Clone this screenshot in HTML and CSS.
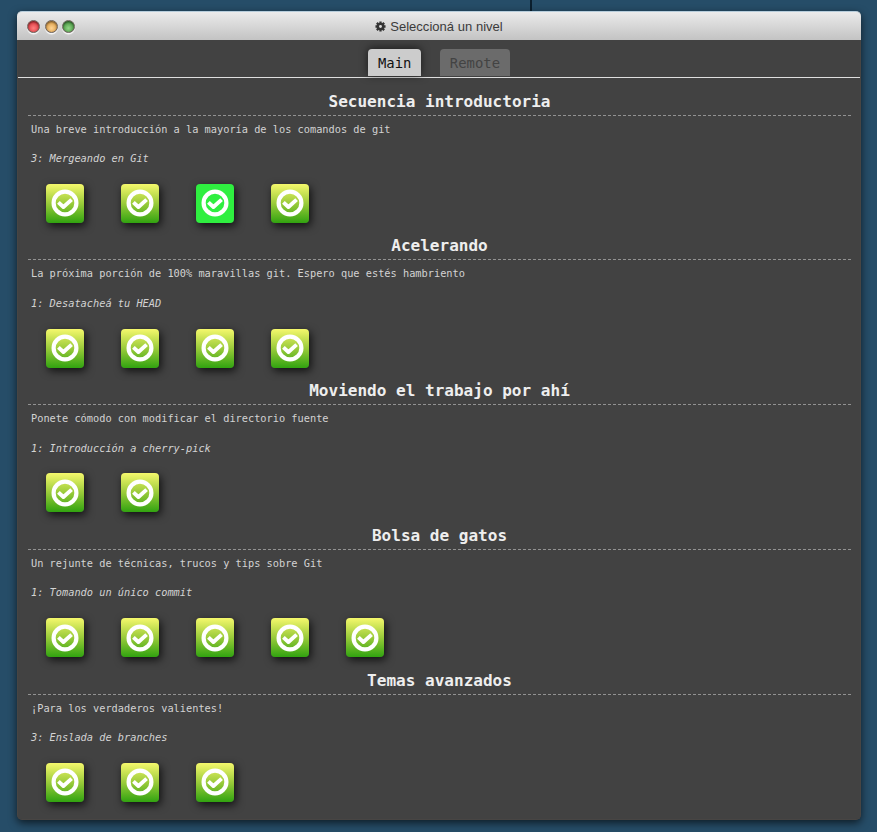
FILE: index.html
```html
<!DOCTYPE html>
<html lang="es">
<head>
<meta charset="utf-8">
<title>Seleccioná un nivel</title>
<link rel="stylesheet" href="styles.css">
</head>
<body>
<svg class="defs" width="0" height="0" aria-hidden="true">
  <symbol id="ok" viewBox="0 0 28 28">
    <circle cx="14" cy="14" r="11.4" fill="none" stroke="#fff" stroke-width="4.2"/>
    <path d="M7.4 13.3l5 4.7 8.2-7.4" fill="none" stroke="#fff" stroke-width="3.9" stroke-linejoin="round"/>
  </symbol>
</svg>
<div class="branch-line"></div>
<main class="window">
  <header class="titlebar">
    <div class="buttons"><i class="red"></i><i class="yellow"></i><i class="green"></i></div>
    <svg class="gear" viewBox="0 0 12 12"><g stroke="#333" stroke-width="2.5"><path d="M6 .5v11M.5 6h11M2 2l8 8M10 2L2 10"/></g><circle cx="6" cy="6" r="2.9" fill="#dcdcdc" stroke="#333" stroke-width="2.6"/></svg>
    <span class="caption">Seleccioná un nivel</span>
  </header>
  <nav class="tabs"><div class="tab active">Main</div><div class="tab">Remote</div></nav>
  <div class="levels" id="levels"></div>
</main>
<script src="levels.js"></script>
</body>
</html>
```

FILE: styles.css
```css
* { box-sizing: border-box; }
body {
  margin: 0;
  height: 832px;
  padding: 11px 16px 0 17px;
  overflow: hidden;
  background: #264d68;
  font-family: "DejaVu Sans Mono", monospace;
}
.defs { position: absolute; }
.branch-line {
  position: absolute;
  left: 530px;
  top: 0;
  width: 2px;
  height: 11px;
  background: #0b1f2e;
}
.window {
  position: relative;
  height: 809px;
  border: 1px solid #484543;
  border-top: 0;
  border-radius: 5px;
  background: #424242;
  box-shadow: 0 3px 9px rgba(0, 0, 0, .65);
}
.titlebar {
  display: flex;
  align-items: center;
  justify-content: center;
  position: relative;
  height: 29px;
  margin: 0 -1px;
  padding-top: 2px;
  border-top: 1px solid #b7cddb;
  border-radius: 5px 5px 0 0;
  background: linear-gradient(#ebebeb, #c3c3c3);
}
.buttons {
  position: absolute;
  left: 10px;
  top: 8px;
  display: flex;
  gap: 4.5px;
}
.buttons i {
  width: 13px;
  height: 13px;
  border-radius: 50%;
  border: 1px solid #70645d;
  box-shadow: 0 1.5px 1px rgba(255, 255, 255, .85), inset 0 1px 2px rgba(0, 0, 0, .55);
}
.red { background: radial-gradient(circle at 50% 65%, #ff7d7d, #dd4148 65%); }
.yellow { background: radial-gradient(circle at 50% 65%, #ffd391, #dfa450 65%); }
.green { background: radial-gradient(circle at 50% 65%, #91d584, #4f9c48 65%); }
.gear { width: 11px; height: 11px; margin: -2px 4px 0 0; }
.caption {
  font: 13px/20px "Liberation Sans", sans-serif;
  letter-spacing: .03px;
  color: #3b3b3b;
}
.tabs {
  display: flex;
  justify-content: center;
  align-items: flex-end;
  gap: 19px;
  height: 38px;
  padding-bottom: 1px;
  border-bottom: 1px solid #dedede;
}
.tab {
  height: 27px;
  padding: 0 9.7px;
  border-radius: 4px 4px 0 0;
  background: #6b6b6b;
  color: #434343;
  font-size: 13.9px;
  line-height: 28px;
}
.tab.active {
  background: #ccc;
  color: #111;
  box-shadow: 0 -1px 9px rgba(0, 0, 0, .6);
}
.levels { padding: 10.5px 9px 0 10px; }
.sequence { height: 144.75px; }
.sequence h2 {
  margin: 0;
  height: 27px;
  border-bottom: 1px dashed #929292;
  color: #eee;
  font-size: 16.05px;
  line-height: 25px;
  text-align: center;
}
.sequence p {
  margin: 0 0 0 3px;
  height: 29.5px;
  color: #d3d3d3;
  font-size: 10.3px;
  line-height: 27.8px;
}
.sequence .name { font-style: italic; }
.icons {
  display: flex;
  gap: 37px;
  padding: 9.4px 0 0 18px;
}
.icon {
  display: grid;
  place-items: center;
  width: 38px;
  height: 39px;
  border-radius: 4px;
  background: linear-gradient(#f5f86c, #9acb3a 50%, #31a310);
  box-shadow: 2px 3px 9px rgba(0, 0, 0, .75);
}
.icon.current { background: #2fef40; }
.icon svg { width: 28px; height: 28px; }
```

FILE: levels.js
```js
const sequences = [
  ['Secuencia introductoria', 'Una breve introducción a la mayoría de los comandos de git', '3: Mergeando en Git', 4, 2],
  ['Acelerando', 'La próxima porción de 100% maravillas git. Espero que estés hambriento', '1: Desatacheá tu HEAD', 4],
  ['Moviendo el trabajo por ahí', 'Ponete cómodo con modificar el directorio fuente', '1: Introducción a cherry-pick', 2],
  ['Bolsa de gatos', 'Un rejunte de técnicas, trucos y tips sobre Git', '1: Tomando un único commit', 5],
  ['Temas avanzados', '¡Para los verdaderos valientes!', '3: Enslada de branches', 3]
];
document.getElementById('levels').innerHTML = sequences.map(([title, about, name, count, current]) => `
  <section class="sequence">
    <h2>${title}</h2>
    <p>${about}</p>
    <p class="name">${name}</p>
    <div class="icons">${Array.from({ length: count }, (_, i) =>
      `<div class="icon${i === current ? ' current' : ''}"><svg><use href="#ok"/></svg></div>`).join('')}</div>
  </section>`).join('');
```
